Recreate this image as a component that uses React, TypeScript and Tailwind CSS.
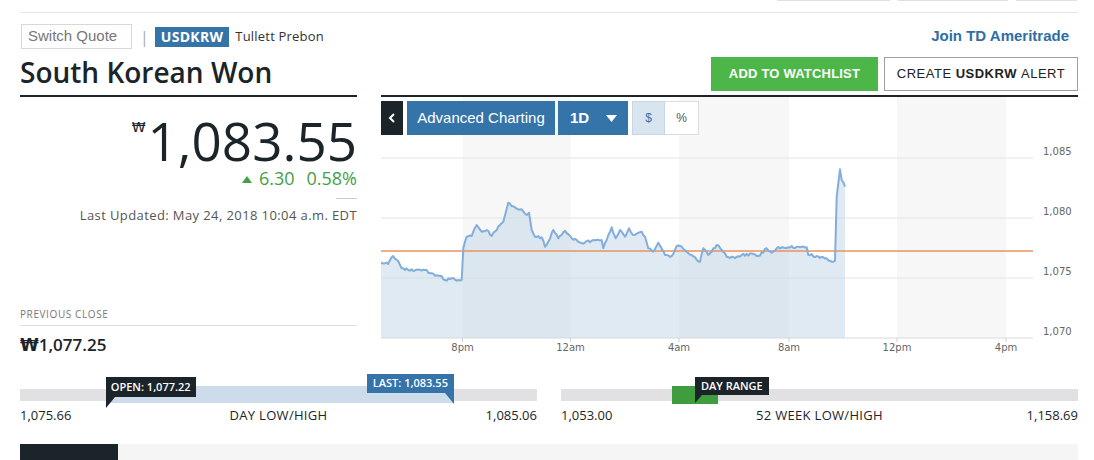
import React from 'react';

const keyPts: [number, number][] = [
  [381, 262.3], [388, 264], [393, 256], [398, 260.7], [401.7, 268.3], [408.3, 270], [425, 270],
  [430, 273.3], [440, 275.7], [445, 280], [451.7, 278.3], [456.7, 280.7], [461.7, 280],
  [463.3, 248.3], [466.7, 236.7], [471.7, 236], [476.7, 225], [481.7, 231.7], [486.7, 230],
  [491.7, 236], [496.7, 230], [500, 225], [503.3, 221.7], [508.3, 202.7], [515, 207.3],
  [521.7, 209.3], [526.7, 215], [529, 212.7], [531.7, 230], [535, 236.7], [541.7, 237.3],
  [545, 246.7], [548.3, 241.7], [553.3, 230], [558.3, 238.3], [565, 230.7], [571.7, 238.3],
  [581.7, 243.3], [591.7, 240.7], [601.7, 240], [603.3, 248.3], [606.7, 240], [611.7, 227.3],
  [615.7, 238.3], [620, 230], [625, 236.7], [629, 228.3], [633.3, 235], [641.7, 231.7],
  [645, 236.7], [648.3, 248.3], [653.3, 251.7], [658.3, 242.7], [662.3, 250], [665, 255],
  [671.7, 256], [676.7, 246], [681.7, 246.7], [686.7, 251.7], [691.7, 255], [700, 261.7],
  [703.3, 248.3], [708.3, 255], [711.7, 251.7], [716.7, 245], [721.7, 250], [726.7, 256.7],
  [735, 258.3], [741.7, 255], [753.3, 254], [758.3, 256], [766.7, 248.3], [771.7, 252.7],
  [776.7, 248.3], [788.3, 247.3], [796.7, 246.7], [806.7, 247.3], [808.3, 255], [816.7, 256],
  [826.7, 258.3], [830, 260.7], [835, 260.7], [836.7, 196.7], [840, 169.3], [841.7, 180],
  [845, 186.7],
];

function buildLine(): [number, number][] {
  const out: [number, number][] = [];
  for (let i = 0; i < keyPts.length - 1; i++) {
    const [x0, y0] = keyPts[i];
    const [x1, y1] = keyPts[i + 1];
    const steep = Math.abs(y1 - y0) > 15;
    const steps = steep ? 1 : Math.max(1, Math.round((x1 - x0) / 1.6));
    for (let s = 0; s < steps; s++) {
      const t = s / steps;
      const x = x0 + (x1 - x0) * t;
      let y = y0 + (y1 - y0) * t;
      if (s > 0) {
        const n = Math.sin(x * 12.9898 + 78.233) * 43758.5453;
        y += (n - Math.floor(n) - 0.5) * 2.6;
      }
      out.push([x, y]);
    }
  }
  out.push(keyPts[keyPts.length - 1]);
  return out;
}

const line = buildLine();
const lineD = line.map(([x, y], i) => `${i ? 'L' : 'M'}${x.toFixed(1)},${y.toFixed(1)}`).join(' ');
const areaD = `${lineD} L845,338 L381,338 Z`;

const xLabels: [string, number][] = [
  ['8pm', 462.5], ['12am', 570.5], ['4am', 679], ['8am', 789], ['12pm', 897], ['4pm', 1006],
];
const yLabels: [string, number][] = [
  ['1,085', 155], ['1,080', 215], ['1,075', 275], ['1,070', 335],
];

function Chart() {
  return (
    <svg className="block" width={697} height={263} viewBox="381 97 697 263">
      <rect x={462.5} y={97} width={108} height={241} fill="#f7f7f7" />
      <rect x={679} y={97} width={110} height={241} fill="#f7f7f7" />
      <rect x={897} y={97} width={109} height={241} fill="#f7f7f7" />
      {[158, 218, 278].map((y) => (
        <line key={y} x1={381} x2={1033} y1={y} y2={y} stroke="#e4e4e4" strokeWidth={1} />
      ))}
      <line x1={381} x2={1033} y1={338} y2={338} stroke="#dadada" strokeWidth={1} />
      <path d={areaD} fill="#c6d8ea" fillOpacity={0.55} />
      <line x1={381} x2={1033} y1={251} y2={251} stroke="#e8935f" strokeWidth={1.5} />
      <path d={lineD} fill="none" stroke="#82aedb" strokeWidth={2} strokeLinejoin="round" />
      {xLabels.map(([t, x]) => (
        <g key={t}>
          <line x1={x} x2={x} y1={338} y2={342} stroke="#d0d0d0" />
          <text x={x} y={351} textAnchor="middle" fontSize={10} fill="#666" fontFamily="'DejaVu Sans', sans-serif">
            {t}
          </text>
        </g>
      ))}
      {yLabels.map(([t, y]) => (
        <text key={t} x={1043} y={y} fontSize={10} fill="#666" fontFamily="'DejaVu Sans', sans-serif">
          {t}
        </text>
      ))}
    </svg>
  );
}

function Tail({ side, color }: { side: 'left' | 'right'; color: string }) {
  return (
    <svg
      className={side === 'left' ? 'absolute left-0 top-full' : 'absolute right-0 top-full'}
      width={9}
      height={11}
      viewBox="0 0 9 11"
    >
      {side === 'left' ? <polygon points="0,0 9,0 0,11" fill={color} /> : <polygon points="0,0 9,0 9,11" fill={color} />}
    </svg>
  );
}

export default function App() {
  const dayLow = 1075.66;
  const dayHigh = 1085.06;
  const open = 1077.22;
  const last = 1083.55;
  const wkLow = 1053.0;
  const wkHigh = 1158.69;
  const openPct = ((open - dayLow) / (dayHigh - dayLow)) * 100;
  const lastPct = ((last - dayLow) / (dayHigh - dayLow)) * 100;
  const wkL = ((dayLow - wkLow) / (wkHigh - wkLow)) * 100;
  const wkH = ((dayHigh - wkLow) / (wkHigh - wkLow)) * 100;

  return (
    <div className="w-[1094px] h-[460px] overflow-hidden bg-white text-[#1b2429] font-['Open_Sans','DejaVu_Sans',sans-serif]">
      <div className="flex justify-end gap-[8px] pr-[17px]">
        <div className="w-[113px] h-px bg-[#e0e0e0]" />
        <div className="w-[110px] h-px bg-[#e0e0e0]" />
        <div className="w-[61px] h-px bg-[#e0e0e0]" />
      </div>
      <div className="ml-[20px] mr-[16px] mt-[11px] border-t border-[#e6e6e6]" />

      <div className="ml-[20px] mr-[16px] flex items-start gap-[24px]">
        {/* left column */}
        <div className="w-[337px] shrink-0">
          <div className="mt-[11px] flex h-[25px] items-center">
            <div className="ml-px flex h-[25px] w-[111px] items-center border border-[#d8d8d8] pl-[6px] font-['Liberation_Sans',Arial,sans-serif] text-[15px] text-[#777]">
              Switch Quote
            </div>
            <span className="ml-[8px] text-[16px] leading-none text-[#aaa]">|</span>
            <span className="ml-[6px] flex h-[20px] items-center bg-[#3574a8] px-[6px] text-[14px] font-bold tracking-[0.3px] text-white">
              USDKRW
            </span>
            <span className="ml-[6px] text-[13px] tracking-[0.2px] text-[#333]">Tullett Prebon</span>
          </div>
          <h1 className="mt-[6px] border-b-2 border-[#1b2429] pb-[6px] text-[28px] leading-[34px] font-semibold">
            South Korean Won
          </h1>
          <div className="mt-[17px] flex items-start justify-end">
            <span className="mt-[6px] mr-[2px] text-[14px] leading-[14px]">₩</span>
            <span className="text-[53px] leading-[53px]">1,083.55</span>
          </div>
          <div className="mt-[2px] flex items-center justify-end text-[18px] leading-[18px] text-[#43a047]">
            <svg width={10} height={7} viewBox="0 0 10 7" className="mr-[7px] mt-[2px]">
              <polygon points="5,0 10,7 0,7" fill="#43a047" />
            </svg>
            <span>6.30</span>
            <span className="ml-[12px]">0.58%</span>
          </div>
          <div className="ml-auto mt-[11px] h-px w-[21px] bg-[#cccccc]" />
          <div className="mt-[7px] text-right text-[13px] leading-[18px] tracking-[0.4px] text-[#555]">
            Last Updated: May 24, 2018 10:04 a.m. EDT
          </div>
          <div className="mt-[83px] border-b border-[#dddddd] pb-[4px] text-[10px] leading-[14px] tracking-[0.6px] text-[#777] uppercase">
            Previous Close
          </div>
          <div className="mt-[8px] text-[17px] leading-[22px] font-semibold">₩1,077.25</div>
        </div>

        {/* right column */}
        <div className="w-[697px] shrink-0">
          <div className="mt-[11px] flex h-[25px] items-center justify-end pr-[9px]">
            <a className="font-['Liberation_Sans',Arial,sans-serif] text-[15px] font-bold text-[#2f6da3]">
              Join TD Ameritrade
            </a>
          </div>
          <div className="mt-[8px] flex justify-end gap-[6px] border-b-2 border-[#1b2429] pb-[4px] font-['Liberation_Sans',Arial,sans-serif]">
            <button className="flex h-[34px] w-[167px] items-center justify-center bg-[#4cb748] text-[13px] font-bold tracking-[0.2px] text-white">
              ADD TO WATCHLIST
            </button>
            <button className="flex h-[34px] w-[194px] items-center justify-center border border-[#a0a0a0] text-[13px] tracking-[0.5px] text-[#222]">
              CREATE&nbsp;<b>USDKRW</b>&nbsp;ALERT
            </button>
          </div>
          <div className="relative h-[263px]">
            <Chart />
            <div className="absolute left-0 top-[4px] flex h-[34px] font-['Liberation_Sans',Arial,sans-serif]">
              <div className="flex w-[22px] items-center justify-center bg-[#1b2429]">
                <svg width={8} height={12} viewBox="0 0 8 12">
                  <polyline points="6,2 2,6 6,10" fill="none" stroke="#fff" strokeWidth={2} />
                </svg>
              </div>
              <div className="ml-[4px] flex w-[148px] items-center justify-center bg-[#3574a8] text-[15px] text-white">
                Advanced Charting
              </div>
              <div className="ml-[3px] flex w-[70px] items-center justify-between bg-[#3574a8] pl-[12px] pr-[11px] text-[15px] font-bold text-white">
                1D
                <svg width={11} height={7} viewBox="0 0 11 7">
                  <polygon points="0,0 11,0 5.5,7" fill="#fff" />
                </svg>
              </div>
              <div className="ml-[4px] flex w-[33px] items-center justify-center border border-[#c9d6e3] bg-[#d8e4ef] text-[12px] text-[#3574a8]">
                $
              </div>
              <div className="flex w-[34px] items-center justify-center border border-l-0 border-[#dddddd] bg-white text-[12px] text-[#555]">
                %
              </div>
            </div>
          </div>
        </div>
      </div>

      {/* ranges */}
      <div className="ml-[20px] mr-[16px] mt-[14px] flex gap-[24px]">
        <div className="w-[517px] pt-[15px]">
          <div className="relative h-[12px] bg-[#e1e1e4]">
            <div
              className="absolute top-[-3px] h-[17px] bg-[#cddcea]"
              style={{ left: `${openPct}%`, width: `${lastPct - openPct}%` }}
            />
            <div
              className="absolute top-[-12px] flex h-[20px] items-center bg-[#1b2429] px-[5px] text-[11px] font-semibold whitespace-nowrap text-white"
              style={{ left: `${openPct}%` }}
            >
              OPEN: 1,077.22
              <Tail side="left" color="#1b2429" />
            </div>
            <div
              className="absolute top-[-15px] flex h-[19px] items-center bg-[#3574a8] px-[6px] text-[11px] font-semibold whitespace-nowrap text-white"
              style={{ right: `${100 - lastPct}%` }}
            >
              LAST: 1,083.55
              <Tail side="right" color="#3574a8" />
            </div>
          </div>
          <div className="mt-[5px] flex justify-between text-[13px] leading-[18px] font-medium">
            <span>1,075.66</span>
            <span className="tracking-[0.3px]">DAY LOW/HIGH</span>
            <span>1,085.06</span>
          </div>
        </div>
        <div className="w-[517px] pt-[15px]">
          <div className="relative h-[12px] bg-[#e1e1e4]">
            <div
              className="absolute top-[-3px] h-[18px] bg-[#3f9d40]"
              style={{ left: `${wkL}%`, width: `${wkH - wkL}%` }}
            />
            <div className="absolute left-[134px] top-[-12px] flex h-[18px] items-center bg-[#1b2429] px-[6px] text-[11px] font-semibold whitespace-nowrap text-white">
              DAY RANGE
              <svg className="absolute left-0 top-full" width={7} height={8} viewBox="0 0 7 8">
                <polygon points="0,0 7,0 0,8" fill="#1b2429" />
              </svg>
            </div>
          </div>
          <div className="mt-[5px] flex justify-between text-[13px] leading-[18px] font-medium">
            <span>1,053.00</span>
            <span className="tracking-[0.3px]">52 WEEK LOW/HIGH</span>
            <span>1,158.69</span>
          </div>
        </div>
      </div>

      <div className="ml-[20px] mr-[16px] mt-[20px] flex h-[16px]">
        <div className="w-[98px] bg-[#1b2429]" />
        <div className="flex-1 bg-[#f5f5f5]" />
      </div>
    </div>
  );
}
